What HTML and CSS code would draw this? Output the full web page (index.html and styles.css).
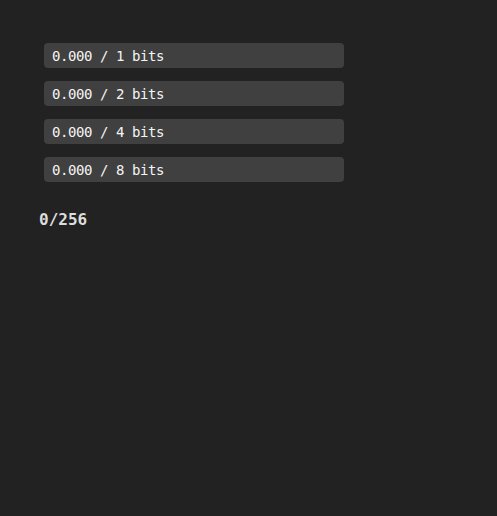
FILE: index.html
```html
<!DOCTYPE html>
<html>
<head>
<meta charset="utf-8">
<link rel="stylesheet" href="styles.css">
</head>
<body>
<div class="app">
  <div class="bars">
    <div class="bar">0.000 / 1 bits</div>
    <div class="bar">0.000 / 2 bits</div>
    <div class="bar">0.000 / 4 bits</div>
    <div class="bar">0.000 / 8 bits</div>
  </div>
  <div class="count">0/256</div>
</div>
</body>
</html>
```
FILE: styles.css
```css
html, body {
  margin: 0;
  padding: 0;
  background: #222222;
  height: 100%;
}
.app {
  padding: 43px 0 0 39px;
  font-family: "DejaVu Sans Mono", monospace;
}
.bars {
  display: flex;
  flex-direction: column;
  gap: 13px;
  margin-left: 5px;
}
.bar {
  width: 292px;
  height: 25px;
  padding-left: 8px;
  box-sizing: content-box;
  background: #404040;
  border-radius: 4px;
  color: #f4f4f4;
  font-size: 14px;
  letter-spacing: -0.43px;
  line-height: 26px;
}
.count {
  margin-top: 27px;
  color: #dddddd;
  font-size: 16px;
  font-weight: bold;
  line-height: 21px;
}
```
